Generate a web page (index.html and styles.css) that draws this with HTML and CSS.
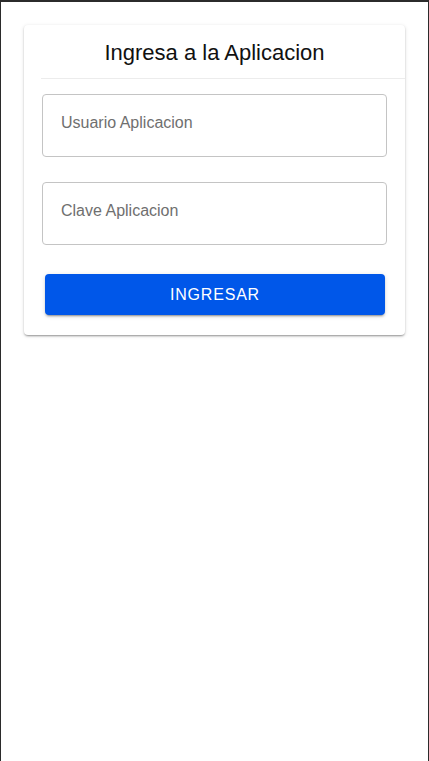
FILE: index.html
```html
<!DOCTYPE html>
<html lang="es">
<head>
<meta charset="utf-8">
<title>Ingresa a la Aplicacion</title>
<link rel="stylesheet" href="styles.css">
</head>
<body>
<div class="frame">
  <div class="card">
    <div class="card-header">
      <h1 class="title">Ingresa a la Aplicacion</h1>
    </div>
    <div class="divider"></div>
    <form class="card-body">
      <div class="field"><input class="input" type="text" placeholder="Usuario Aplicacion"></div>
      <div class="field"><input class="input" type="password" placeholder="Clave Aplicacion"></div>
      <div class="actions"><button type="button" class="btn">INGRESAR</button></div>
    </form>
  </div>
</div>
</body>
</html>
```
FILE: styles.css
```css
* { box-sizing: border-box; }
html, body { margin: 0; padding: 0; background: #fff; }
body { font-family: "Liberation Sans", Arial, sans-serif; }
.frame {
  min-height: 761px;
  border-top: 2px solid #2b2b2b;
  border-left: 1px solid #2b2b2b;
  border-right: 1px solid #2b2b2b;
  padding: 23px 23px;
}
.card {
  background: #fff;
  border-radius: 4px;
  box-shadow: 0 2px 2px -1px rgba(0,0,0,0.25), 0 1px 2px 0 rgba(0,0,0,0.14), 0 1px 4px 0 rgba(0,0,0,0.12);
  padding-bottom: 20px;
}
.card-header {
  height: 53px;
  display: flex;
  align-items: center;
  justify-content: center;
}
.title {
  margin: 0;
  font-weight: 400;
  font-size: 22px;
  color: #111;
  padding-top: 2px;
}
.divider {
  height: 1px;
  background: #ececec;
  margin-left: 17px;
}
.card-body {
  display: flex;
  flex-direction: column;
  padding: 15px 18px 0 18px;
  gap: 25px;
  margin: 0;
}
.field { display: flex; }
.input {
  width: 100%;
  height: 63px;
  border: 1px solid #c4c4c4;
  border-radius: 4px;
  padding: 0 18px 6px 18px;
  font-family: "Liberation Sans", Arial, sans-serif;
  font-size: 16px;
  color: #333;
  outline: none;
  background: #fff;
}
.input::placeholder { color: #6f6f6f; opacity: 1; }
.actions {
  display: flex;
  padding: 4px 2px 0 3px;
}
.btn {
  width: 100%;
  height: 41px;
  border: 0;
  border-radius: 4px;
  background: #0057e9;
  color: #fff;
  font-family: "Liberation Sans", Arial, sans-serif;
  font-size: 16px;
  letter-spacing: 0.8px;
  box-shadow: 0 3px 1px -2px rgba(0,0,0,0.2), 0 2px 2px 0 rgba(0,0,0,0.14), 0 1px 5px 0 rgba(0,0,0,0.12);
  cursor: pointer;
}
```
